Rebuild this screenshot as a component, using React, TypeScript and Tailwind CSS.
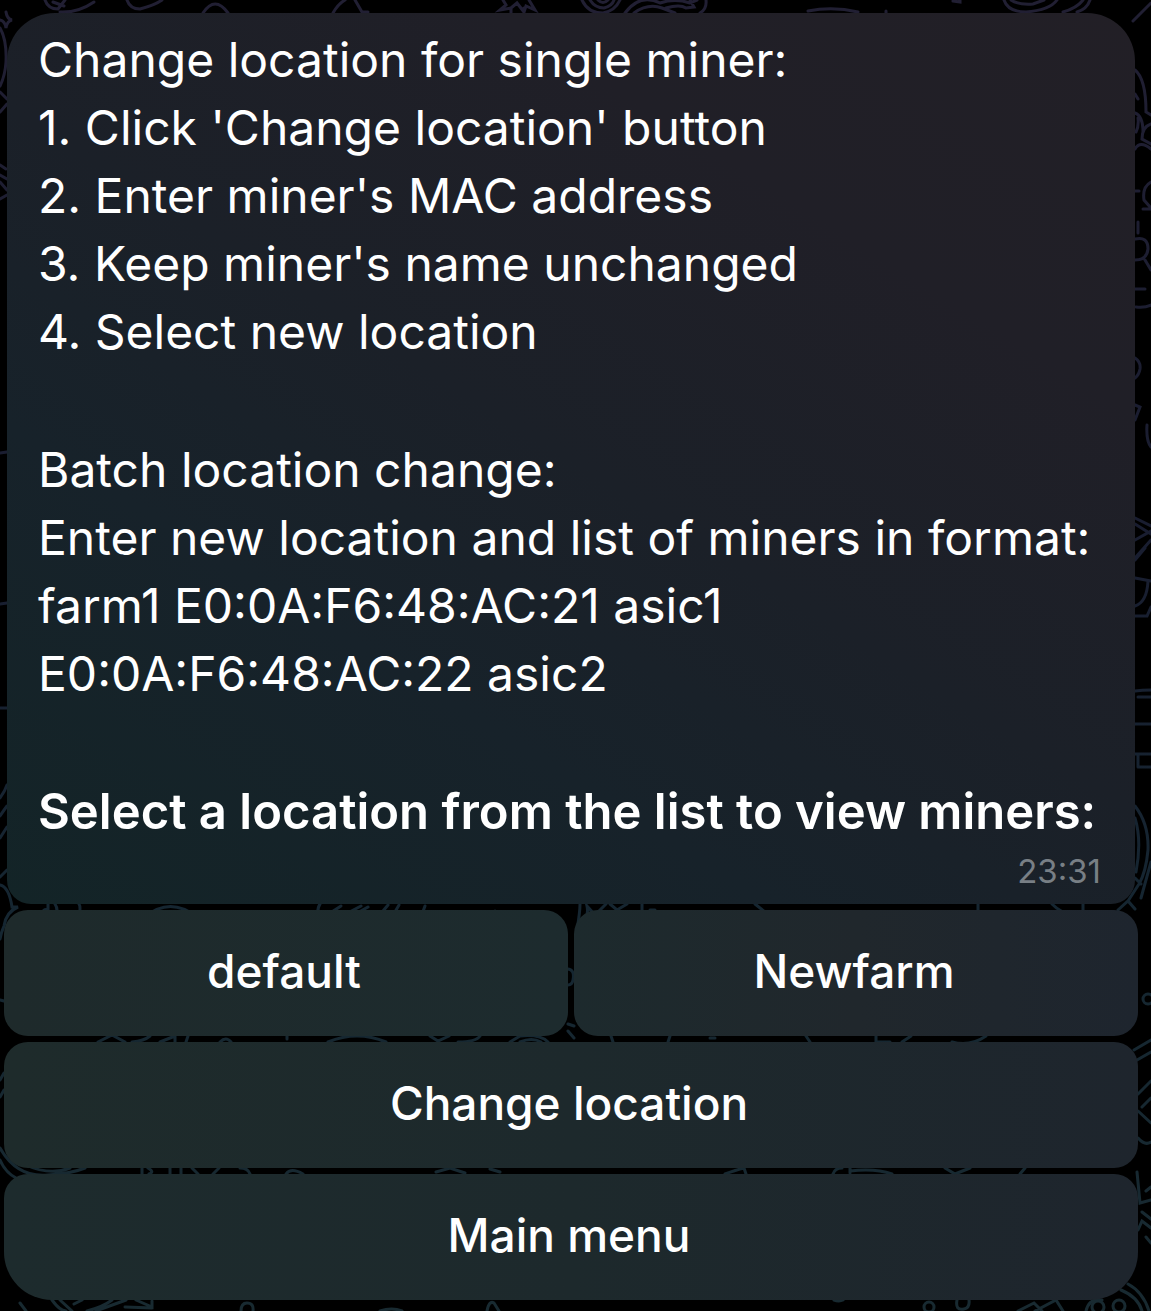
import { ReactNode } from "react";
import clsx from "clsx";

const singleSteps = [
  "Change location for single miner:",
  "1. Click 'Change location' button",
  "2. Enter miner's MAC address",
  "3. Keep miner's name unchanged",
  "4. Select new location",
];

const batchSteps = [
  "Batch location change:",
  "Enter new location and list of miners in format:",
  "farm1 E0:0A:F6:48:AC:21 asic1",
  "E0:0A:F6:48:AC:22 asic2",
];

// Doodle wallpaper behind the chat
const Wallpaper = () => (
  <svg
    viewBox="0 0 1151 1311"
    preserveAspectRatio="xMidYMin slice"
    className="absolute inset-0 -z-10 h-full w-full"
    fill="none"
    strokeWidth={3}
    strokeLinecap="round"
    aria-hidden="true"
  >
    <defs>
      <linearGradient id="ink" x1="0" y1="0" x2="0" y2="1311" gradientUnits="userSpaceOnUse">
        <stop offset="0" stopColor="#211f33" />
        <stop offset="0.4" stopColor="#191d30" />
        <stop offset="0.7" stopColor="#152631" />
        <stop offset="1" stopColor="#182a31" />
      </linearGradient>
    </defs>
    <g stroke="url(#ink)">
      {/* top edge */}
      <path d="M45 0Q48 9 58 9L65 0M53 2L64 6M60 12Q78 13 94 2M127 0Q130 9 140 9Q155 5 162 0M203 13Q215-5 228 13M333 13Q338 4 345 0M355 0L362 12L368 12" />
      <path d="M6 12Q7 19 12 20Q7 21 6 28Q5 21 0 20M0 28Q7 40 6 62Q5 76 0 86M0 92L7 99M0 112L7 104" />
      <path d="M503 0L506 5L500 10L511 8L517 3L524 12L526 6L535 10L529 0M511 8V13M524 8V13" />
      <path d="M582 0Q588 13 603 13Q615 11 620 0M590 0Q595 8 604 8Q612 6 614 0M598 0Q603 5 608 0M625 13Q640-7 660 3Q675-2 690 3L697 0M634 13Q648 3 662 8L675 13M666 8Q680 4 686 8L694 7L690 0M700 13Q707 9 706 0" />
      <path d="M808 11Q833 6 858 12M886 11V13M953 1L960 2V0M1004 0Q1008 12 1026 12Q1050 10 1057 0M1011 0Q1018 5 1033 4L1044 0M1063 12Q1077 8 1083 0M1077 12Q1087 9 1090 0M1133 21L1151 3" />
      {/* right edge */}
      <path d="M1135 70Q1146 79 1146 112L1151 115M1135 94L1138 99M1135 113Q1143 116 1143 132M1138 118Q1139 126 1136 132M1151 124Q1142 127 1142 139L1151 144M1135 149Q1140 140 1151 149M1135 191H1139M1151 182Q1142 187 1144 200L1151 208M1143 209L1151 209M1138 222V233M1135 239Q1148 236 1148 249Q1147 260 1135 260M1145 260L1151 270M1135 289H1145M1136 307Q1145 308 1151 305M1135 358Q1141 362 1140 369Q1139 375 1135 378M1135 405L1140 407L1135 420M1147 425Q1146 441 1151 447" />
      <path d="M1135 518L1151 526M1135 524L1151 534M1135 540L1151 531M1135 558L1151 540M1135 560L1145 548M1135 578L1151 581M1148 581Q1147 602 1135 606M1135 616H1147L1151 607M1135 691Q1142 690 1151 690M1138 697H1151M1135 724H1151M1135 754H1151M1138 767H1151M1138 754V767" />
      <path d="M1135 806Q1149 824 1148 850Q1146 872 1139 884L1128 901M1135 818Q1142 841 1136 872M1135 878L1141 884M1118 910L1128 901L1135 909M1151 862L1141 898" />
      <circle cx="1148" cy="999" r="5" />
      <path d="M1134 1050L1151 1040M1137 1060L1151 1052M1138 1094L1151 1081M1138 1111L1151 1123M1142 1107L1151 1098M1138 1138Q1145 1146 1151 1142M1137 1172L1140 1203L1151 1200M1146 1191L1151 1187M1142 1212L1151 1219M1138 1230L1142 1221L1151 1228M1146 1237L1151 1243" />
      {/* left edge */}
      <path d="M0 165L6 169M0 175L7 179M0 182L7 190M0 199L7 195M0 453L7 452M0 604L7 603M0 708H7M0 798Q5 791 7 785M0 816Q4 810 7 806M0 838L7 827M0 877L7 870M0 885Q9 887 12 907L18 907Q6 912 4 926Q1 933 0 939M0 1000L4 1001M0 1080L4 1073M0 1097L4 1090M0 1148Q17 1178 48 1175Q70 1174 85 1168M0 1160Q5 1172 16 1178M26 1165Q50 1176 70 1168" />
      {/* gaps between the keyboard rows */}
      <path d="M41 916Q43 908 48 910V904M55 904Q60 912 52 917M79 917Q81 907 79 904M145 917Q170 896 197 917M318 917Q317 908 320 904M324 917L341 906M340 917L361 906M350 917L368 907M378 917L388 905M392 917L399 905M402 914H422L425 906M448 917Q453 907 458 917M490 914L495 911" />
      <path d="M577 930Q580 912 580 904M583 925Q589 915 587 906L595 915L606 904M610 904L617 910L627 904M642 904V916M650 910H655M755 904L770 916M978 904V917M1034 917Q1038 908 1043 917M1052 904Q1060 912 1071 915M1083 904V917" />
      <path d="M568 969Q575 970 573 980Q572 985 568 985M568 1024L574 1026M568 1031L574 1038" />
      <path d="M98 1042L112 1035L125 1042M132 1042Q144 1041 150 1036M160 1042L175 1036V1042M188 1036L186 1042M220 1042Q226 1036 231 1042M287 1036V1039M328 1042Q357 1030 386 1042M430 1036L438 1041L449 1036M458 1042Q476 1042 480 1036M510 1042L520 1036Q540 1034 548 1042M520 1042Q532 1037 541 1042M611 1036L613 1042M668 1042L670 1036M710 1038H715M806 1036L810 1042M876 1036V1042H890M902 1042L911 1036M952 1042Q970 1047 986 1036" />
      <path d="M142 1168V1174M148 1168Q155 1172 149 1174M170 1168V1174M181 1168V1174M192 1168L198 1174M213 1174L219 1168M240 1168Q248 1168 250 1174M286 1174Q291 1167 303 1174M436 1172L450 1168L465 1173M490 1169L500 1172M725 1174Q736 1170 744 1168L746 1174M833 1174Q835 1168 842 1168M850 1168V1173M850 1171Q875 1168 892 1174M945 1168L955 1174L970 1168M1020 1174L1025 1168" />
      {/* bottom edge */}
      <path d="M20 1303L26 1311M52 1300Q60 1311 66 1311M60 1300L72 1311M74 1304L82 1300M87 1311Q103 1307 112 1300M96 1311L126 1300M136 1300L152 1307V1301M125 1307L152 1308M241 1311Q241 1303 247 1303Q254 1303 253 1311M380 1311Q392 1307 402 1311M487 1311Q489 1300 494 1303L499 1311M834 1300Q839 1302 843 1300" />
      <circle cx="929" cy="1307" r="5" />
      <path d="M957 1300Q955 1311 964 1309Q970 1308 969 1300M1018 1311L1034 1303L1042 1311M1035 1311L1056 1300L1063 1311M1086 1311Q1089 1298 1102 1300M1128 1284Q1143 1292 1149 1311M1121 1290Q1138 1297 1142 1311" />
      <circle cx="1098" cy="1307" r="6" />
      <circle cx="1119" cy="1306" r="6" />
    </g>
  </svg>
);

type KeyProps = {
  children: ReactNode;
  className?: string;
};

const KeyButton = ({ children, className }: KeyProps) => (
  <button
    type="button"
    className={clsx(
      "h-[126px] flex-1 cursor-pointer pr-1 pb-1 text-[46px] leading-[56px] font-medium text-white",
      className
    )}
  >
    {children}
  </button>
);

const App = () => {
  return (
    <main className="relative isolate min-h-screen overflow-hidden bg-black pt-[13px] pr-[13px] pb-[11px] pl-1 font-['Inter','Liberation_Sans',sans-serif]">
      <Wallpaper />

      {/* message bubble */}
      <article className="mx-[3px] rounded-t-[48px] rounded-b-[24px] bg-[linear-gradient(212deg,#221f26_0%,#201f27_25%,#1b2028_50%,#17222a_70%,#132427_100%)] px-[31px] pt-[13px] pb-[10px] text-[48px] leading-[68px] text-white">
        {singleSteps.map((line) => (
          <p key={line}>{line}</p>
        ))}
        <div className="mt-[70px]">
          {batchSteps.map((line) => (
            <p key={line}>{line}</p>
          ))}
        </div>
        <p className="mt-[70px] text-[49px] font-semibold">Select a location from the list to view miners:</p>
        <time className="block pt-[2px] pr-[3px] text-right text-[33px] leading-[46px] text-[#787f85]">23:31</time>
      </article>

      {/* inline keyboard */}
      <div className="mt-[6px] flex flex-col gap-[6px]">
        <div className="flex gap-[6px]">
          <KeyButton className="rounded-[24px] bg-linear-to-r from-[#1e2a2b] to-[#1d2b2e]">default</KeyButton>
          <KeyButton className="rounded-[24px] bg-linear-to-r from-[#1d2a2d] via-[#20272c] to-[#1e252e]">Newfarm</KeyButton>
        </div>
        <div className="flex">
          <KeyButton className="rounded-[24px] bg-linear-to-r from-[#1e2b2b] via-[#1d292c] to-[#1e252d]">Change location</KeyButton>
        </div>
        <div className="flex">
          <KeyButton className="rounded-t-[24px] rounded-b-[48px] bg-linear-to-r from-[#1d2b2d] via-[#1d292c] to-[#1e252d]">Main menu</KeyButton>
        </div>
      </div>
    </main>
  );
};

export default App;
